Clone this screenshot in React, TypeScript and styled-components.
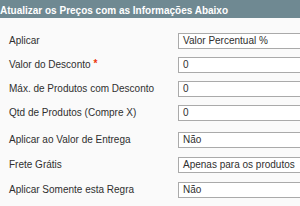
import styled, { createGlobalStyle } from "styled-components";

const GlobalStyle = createGlobalStyle`
  html, body {
    margin: 0;
    padding: 0;
    background: #fafafa;
    overflow: hidden;
  }
  body {
    font-family: "Liberation Sans", Arial, sans-serif;
    font-size: 10px;
    color: #2f2f2f;
  }
`;

const rows = [
  { label: "Aplicar", value: "Valor Percentual %" },
  { label: "Valor do Desconto", value: "0", required: true },
  { label: "Máx. de Produtos com Desconto", value: "0" },
  { label: "Qtd de Produtos (Compre X)", value: "0" },
  { label: "Aplicar ao Valor de Entrega", value: "Não", tall: true, gap: true },
  { label: "Frete Grátis", value: "Apenas para os produtos", tall: true },
  { label: "Aplicar Somente esta Regra", value: "Não", tall: true },
];

const App = () => {
  return (
    <Panel>
      <GlobalStyle />
      <Head>Atualizar os Preços com as Informações Abaixo</Head>
      <Fieldset>
        {rows.map((r) => (
          <Row key={r.label} $tall={r.tall} $gap={r.gap}>
            <Label>
              {r.label}
              {r.required && <Required>*</Required>}
            </Label>
            <Field>{r.value}</Field>
          </Row>
        ))}
      </Fieldset>
    </Panel>
  );
};

const Panel = styled.div`
  width: 300px;
  height: 206px;
  background: #fafafa;
  overflow: hidden;
`;

const Head = styled.h4`
  margin: 0;
  height: 18px;
  box-sizing: border-box;
  padding: 5px 0 0 0;
  background: #6f8992;
  color: #fff;
  font-size: 10px;
  font-weight: bold;
  line-height: 12px;
  white-space: nowrap;
`;

const Fieldset = styled.div`
  padding-top: 11px;
  display: flex;
  flex-direction: column;
`;

const Row = styled.div<{ $tall?: boolean; $gap?: boolean }>`
  display: flex;
  align-items: center;
  height: ${(p) => (p.$tall ? "25px" : "24px")};
  margin-top: ${(p) => (p.$gap ? "2px" : "0")};
`;

const Label = styled.div`
  width: 170px;
  padding-left: 9px;
  box-sizing: border-box;
  flex-shrink: 0;
  margin-right: -1px;
  white-space: nowrap;
  line-height: 12px;
  color: #2f2f2f;
`;

const Required = styled.span`
  color: #eb340a;
  margin-left: 3px;
  font-weight: bold;
  position: relative;
  top: -1px;
`;

const Field = styled.div`
  margin-left: 9px;
  width: 260px;
  flex-shrink: 0;
  height: 16px;
  box-sizing: border-box;
  border: 1px solid #aaa;
  background: #fff;
  padding: 0 0 0 4px;
  line-height: 14px;
  color: #2f2f2f;
  white-space: nowrap;
`;

export default App;
